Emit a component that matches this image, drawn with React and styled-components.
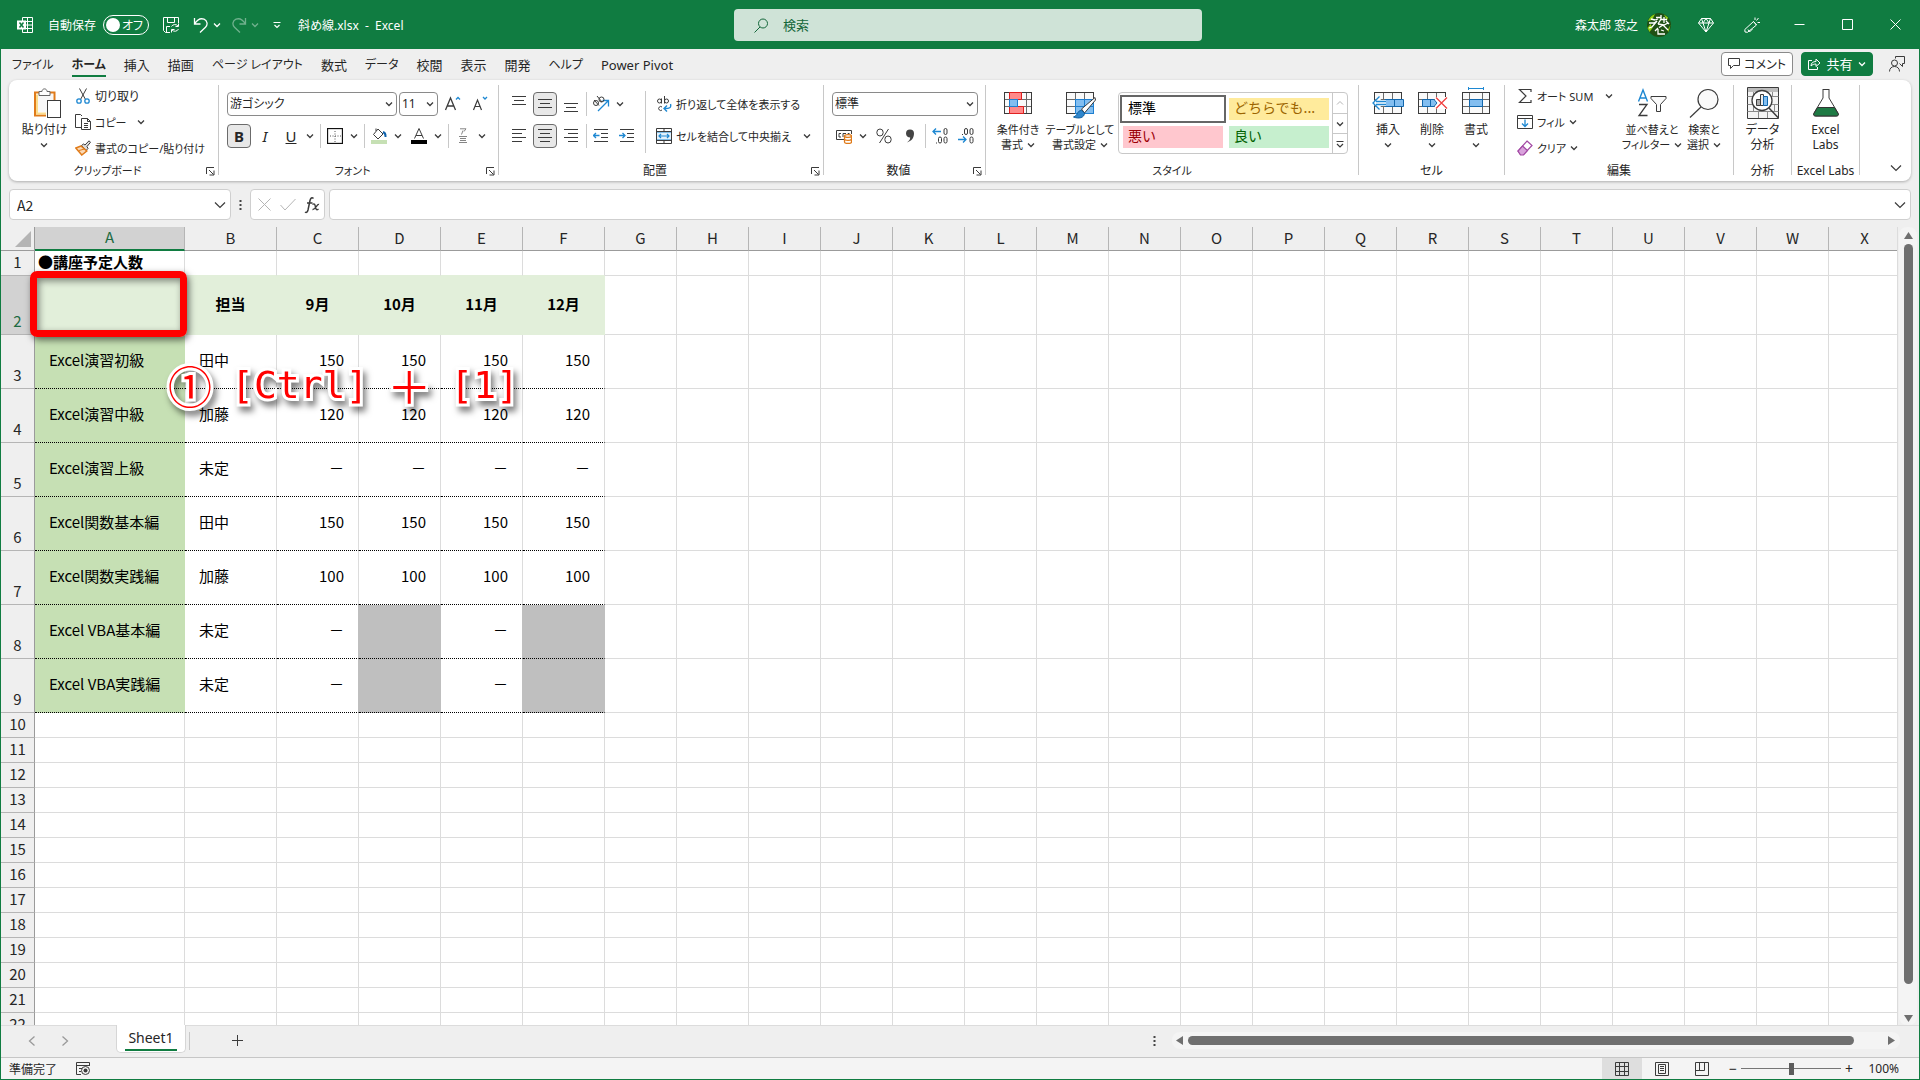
import React, { useState } from "react";
import styled, { createGlobalStyle } from "styled-components";

const colors = {
  green: "#107c41",
  chrome: "#efefef",
  line: "#c8c8c8",
  grid: "#dcdcdc",
  text: "#262626",
  icon: "#3b3b3b",
  blue: "#1e88d2",
  headFill: "#e2efda",
  nameFill: "#c6e0b4",
  blocked: "#bfbfbf",
};

const uiFont = `"Noto Sans", "Noto Sans CJK JP", sans-serif`;
const sheetFont = `"Noto Sans CJK JP", sans-serif`;

const GlobalStyle = createGlobalStyle`
  * {
    box-sizing: border-box;
  }
  body {
    margin: 0;
    font-family: ${uiFont};
    font-size: 12px;
    font-feature-settings: "palt";
    color: ${colors.text};
  }
  button,
  input,
  select {
    font: inherit;
    font-feature-settings: inherit;
    color: inherit;
    margin: 0;
  }
  svg {
    display: block;
    flex: none;
  }
`;

const Window = styled.div`
  display: flex;
  flex-direction: column;
  height: 100vh;
  background: ${colors.chrome};
  border: 1px solid ${colors.green};
  border-top: 0;
  overflow: hidden;
`;

/* ---------- title bar ---------- */

const TitleBar = styled.header`
  display: grid;
  grid-template-columns: minmax(0, 1fr) 468px minmax(0, 1fr);
  align-items: center;
  flex: none;
  height: 49px;
  padding-left: 16px;
  background: ${colors.green};
  color: #fff;
`;

const TitleLeft = styled.div`
  display: flex;
  align-items: center;
  gap: 6px;
  margin-top: 1px;
`;

const TitleRight = styled.div`
  display: flex;
  align-items: center;
  justify-content: flex-end;
`;

const IconButton = styled.button`
  display: flex;
  align-items: center;
  justify-content: center;
  width: ${({ $w }) => $w || 24}px;
  height: 24px;
  padding: 0;
  border: 1px solid ${({ $active }) => ($active ? "#6b6b6b" : "transparent")};
  border-radius: 4px;
  background: ${({ $active }) => ($active ? "#e8e8e8" : "transparent")};
  opacity: ${({ $dim }) => ($dim ? 0.4 : 1)};
  font-size: 15px;
  line-height: 1;
`;

const AutoSave = styled.label`
  display: flex;
  align-items: center;
  gap: 7px;
  margin: 0 4px 0 9px;
`;

const Switch = styled.span`
  display: grid;
  align-items: center;

  input,
  span {
    grid-area: 1 / 1;
  }
  span {
    justify-self: end;
    padding-right: 6px;
    pointer-events: none;
  }
  input {
    appearance: none;
    width: 46px;
    height: 20px;
    border: 1px solid #fff;
    border-radius: 10px;
  }
  input::before {
    content: "";
    display: block;
    width: 14px;
    height: 14px;
    margin: 2px;
    border-radius: 50%;
    background: #fff;
  }
`;

const FileName = styled.span`
  margin-left: 3px;
  white-space: pre;
`;

const SearchBox = styled.label`
  display: flex;
  align-items: center;
  gap: 14px;
  height: 32px;
  margin-top: 1px;
  padding: 0 20px;
  border-radius: 4px;
  background: #cfe3d7;
  color: #14673a;

  input {
    flex: 1;
    min-width: 0;
    padding: 0;
    border: 0;
    outline: 0;
    background: transparent;
    font-size: 13px;
  }
  input::placeholder {
    color: #14673a;
    opacity: 1;
  }
`;

const UserInfo = styled.div`
  display: flex;
  align-items: center;
  gap: 9px;
  margin-right: 12px;
`;

/* ---------- tabs ---------- */

const TabBar = styled.nav`
  display: flex;
  align-items: center;
  flex: none;
  height: 31px;
  padding: 0 6px 0 2px;
`;

const Tab = styled.button`
  padding: 0 9px;
  border: 0;
  background: none;
  font-size: ${({ $small }) => ($small ? 12 : 13)}px;
  font-weight: ${({ $active }) => ($active ? 700 : 400)};
  line-height: 20px;
  white-space: nowrap;

  span {
    display: block;
    padding-top: 3px;
    border-bottom: 2px solid
      ${({ $active }) => ($active ? colors.green : "transparent")};
  }
`;

const TabActions = styled.div`
  display: flex;
  align-items: center;
  gap: 8px;
  margin: 0 0 2px auto;
`;

const PillButton = styled.button`
  display: flex;
  align-items: center;
  justify-content: space-between;
  gap: 4px;
  min-width: 72px;
  height: 24px;
  padding: 0 6px;
  border: 1px solid ${({ $primary }) => ($primary ? colors.green : "#8a8a8a")};
  border-radius: 4px;
  background: ${({ $primary }) => ($primary ? colors.green : "#fff")};
  color: ${({ $primary }) => ($primary ? "#fff" : colors.text)};
  font-size: ${({ $primary }) => ($primary ? 13 : 12)}px;
  white-space: nowrap;
`;

/* ---------- ribbon ---------- */

const Ribbon = styled.section`
  display: flex;
  flex: none;
  height: 101px;
  margin: 0 8px;
  padding-top: 3px;
  border-radius: 8px;
  background: #fff;
  box-shadow: 0 1px 3px rgba(0, 0, 0, 0.28);
`;

const Group = styled.div`
  display: flex;
  flex-direction: column;
  flex: none;
  width: ${({ $w }) => $w}px;
`;

const GroupBody = styled.div`
  display: flex;
  align-items: flex-start;
  height: 80px;
  padding-left: ${({ $pad }) => $pad || 0}px;
`;

const GroupLabel = styled.div`
  display: grid;
  grid-template-columns: ${({ $launcher }) => ($launcher ? "1fr 12px" : "1fr")};
  align-items: center;
  height: 16px;
  font-size: ${({ $small }) => ($small ? 11 : 12)}px;
  line-height: 16px;
  text-align: center;
  white-space: nowrap;
`;

const Launcher = styled.button`
  padding: 0;
  border: 0;
  background: none;
`;

const Divider = styled.div`
  flex: none;
  width: 1px;
  height: 90px;
  margin-top: 2px;
  background: ${colors.line};
`;

const InnerDivider = styled.div`
  flex: none;
  width: 1px;
  height: 62px;
  margin: 8px 8px 0 6px;
  background: ${colors.line};
`;

const ToolRows = styled.div`
  display: flex;
  flex-direction: column;
  gap: 8px;
  padding-top: 9px;
`;

const ToolRow = styled.div`
  display: flex;
  align-items: center;
  gap: 2px;
  height: 24px;
`;

const Split = styled.div`
  display: flex;
  align-items: center;
`;

const Separator = styled.div`
  width: 1px;
  height: 24px;
  margin-left: 1px;
  background: ${colors.line};
`;

const Combo = styled.div`
  display: grid;
  align-items: center;
  width: ${({ $w }) => $w}px;

  select,
  svg {
    grid-area: 1 / 1;
  }
  svg {
    justify-self: end;
    margin-right: 4px;
    pointer-events: none;
  }
  select {
    appearance: none;
    width: 100%;
    height: 24px;
    padding: 0 2px;
    border: 1px solid #8a8a8a;
    border-radius: 4px;
    background: #fff;
    line-height: 20px;
  }
`;

const SmallColumn = styled.div`
  display: flex;
  flex-direction: column;
  width: ${({ $w }) => $w}px;
`;

const SmallButton = styled.button`
  display: flex;
  align-items: center;
  gap: 4px;
  height: ${({ $h }) => $h || 26}px;
  padding: 0 2px;
  border: 0;
  background: none;
  font-size: ${({ $compact }) => ($compact ? 11 : 12)}px;
  white-space: nowrap;

  svg:last-child {
    margin-left: ${({ $chevGap }) => $chevGap || 0}px;
  }
`;

const LargeButton = styled.button`
  display: flex;
  flex-direction: column;
  align-items: center;
  gap: 3px;
  width: ${({ $w }) => $w}px;
  padding: 4px 0 0;
  border: 0;
  background: none;
  font-size: ${({ $compact }) => ($compact ? 11 : 12)}px;
  line-height: 15px;
  white-space: nowrap;
`;

const LargeLabel = styled.span`
  display: flex;
  flex-direction: column;
  align-items: center;
`;

const LabelLine = styled.span`
  display: flex;
  align-items: center;
  justify-content: center;
  gap: 4px;
  min-height: 15px;
`;

const Gallery = styled.div`
  display: flex;
  width: 230px;
  height: 62px;
  margin: 9px 0 0 4px;
  border: 1px solid ${colors.line};
  border-radius: 4px;
`;

const Swatches = styled.div`
  display: grid;
  grid-template-columns: 106px 106px;
  grid-template-rows: 28px 28px;
  flex: 1;
  padding: 2px 0 0 1px;
`;

const Swatch = styled.button`
  padding: 0 5px 4px;
  border: 3px solid #fff;
  background: ${({ $bg }) => $bg};
  color: ${({ $fg }) => $fg};
  font-family: ${sheetFont};
  font-size: 14px;
  font-feature-settings: normal;
  line-height: 18px;
  text-align: left;
  white-space: nowrap;
  outline: ${({ $selected }) => ($selected ? "2px solid #666" : "none")};
  outline-offset: -2px;
`;

const GalleryScroll = styled.div`
  display: grid;
  grid-template-rows: 1fr 1fr 1fr;
  width: 15px;
  border-left: 1px solid ${colors.line};

  button {
    display: grid;
    place-items: center;
    padding: 0;
    border: 0;
    background: none;
  }
  button + button {
    border-top: 1px solid ${colors.line};
  }
`;

const Collapse = styled.button`
  align-self: flex-end;
  margin: 0 9px 9px auto;
  padding: 0;
  border: 0;
  background: none;
`;

/* ---------- formula bar ---------- */

const FormulaBar = styled.section`
  display: flex;
  align-items: center;
  flex: none;
  height: 31px;
  margin: 8px 8px 7px;
`;

const FieldBox = styled.div`
  display: flex;
  align-items: center;
  flex: ${({ $grow }) => ($grow ? "1" : "none")};
  width: ${({ $w }) => ($w ? `${$w}px` : "auto")};
  height: 31px;
  padding: 0 4px 0 7px;
  border: 1px solid #cfcfcf;
  border-radius: 4px;
  background: #fff;

  input {
    flex: 1;
    min-width: 0;
    padding: 0;
    border: 0;
    outline: 0;
    background: transparent;
    font-family: ${sheetFont};
    font-size: 14px;
  }
`;

const Dots = styled.div`
  display: grid;
  place-items: center;
  width: 19px;
`;

const FxBox = styled(FieldBox)`
  justify-content: space-between;
  margin-right: 4px;
`;

/* ---------- sheet ---------- */

const SheetArea = styled.main`
  display: flex;
  flex: 1;
  min-height: 0;
`;

const GridView = styled.div`
  position: relative;
  flex: 1;
  min-width: 0;
  overflow: hidden;
  border-right: 1px solid ${colors.grid};
  background: #fff;
`;

const Table = styled.table`
  table-layout: fixed;
  width: 1900px;
  border-collapse: separate;
  border-spacing: 0;
  font-family: ${sheetFont};
  font-size: 15px;
  font-feature-settings: normal;
  line-height: 18px;
`;

const Corner = styled.td`
  height: 24px;
  padding: 0 3px 3px 0;
  border-right: 1px solid #9b9b9b;
  border-bottom: 1px solid #9b9b9b;
  background: ${colors.chrome};
  vertical-align: bottom;

  svg {
    margin-left: auto;
  }
`;

const ColHead = styled.th`
  height: 24px;
  padding: 0 0 2px;
  border-right: 1px solid #b5b5b5;
  border-bottom: ${({ $active }) =>
    $active ? `2px solid ${colors.green}` : "1px solid #9b9b9b"};
  background: ${({ $active }) => ($active ? "#d2d2d2" : colors.chrome)};
  color: ${({ $active }) => ($active ? "#1e6b43" : colors.text)};
  font-weight: 400;
`;

const RowHead = styled.th`
  height: ${({ $h }) => $h}px;
  padding: 0 0 4px;
  border-right: 1px solid #9b9b9b;
  border-bottom: 1px solid #b5b5b5;
  background: ${({ $active }) => ($active ? "#d2d2d2" : colors.chrome)};
  color: ${({ $active }) => ($active ? "#1e6b43" : colors.text)};
  font-weight: 400;
  vertical-align: bottom;
`;

const Cell = styled.td`
  padding: 0 ${({ $pad }) => ($pad === undefined ? 14 : $pad)}px 3px;
  border-right: 1px solid ${({ $right }) => $right || colors.grid};
  border-bottom: 1px ${({ $dotted }) => ($dotted ? "dotted" : "solid")}
    ${({ $bottom, $dotted }) => ($dotted ? "#000" : $bottom || colors.grid)};
  background: ${({ $fill }) => $fill || "#fff"};
  color: #000;
  font-weight: ${({ $bold }) => ($bold ? 700 : 400)};
  text-align: ${({ $align }) => $align || "left"};
  vertical-align: middle;
  white-space: nowrap;
`;

const Highlight = styled.div`
  position: absolute;
  left: 29px;
  top: 44px;
  width: 157px;
  height: 66px;
  border: 7px solid #f00;
  border-radius: 7px;
  box-shadow: 2px 3px 7px rgba(0, 0, 0, 0.55),
    inset 2px 3px 7px rgba(0, 0, 0, 0.45);
`;

const Callout = styled.div`
  position: absolute;
  left: 167px;
  top: 128px;
  display: flex;
  align-items: center;
  gap: 19px;
  height: 60px;
  color: #f00;
  font-family: "DejaVu Sans Mono", "Noto Sans CJK JP", monospace;
  font-size: 38px;
  font-feature-settings: normal;
  line-height: 60px;
  white-space: nowrap;
  -webkit-text-stroke: 6px #fff;
  paint-order: stroke fill;
  filter: drop-shadow(3px 5px 3px rgba(0, 0, 0, 0.5));
`;

const WideMark = styled.span`
  font-family: ${sheetFont};
  font-size: 44px;
  line-height: 56px;
`;

const VScroll = styled.div`
  display: flex;
  flex-direction: column;
  align-items: center;
  flex: none;
  width: 18px;
  margin: 0 2px 0 1px;
  padding: 5px 0 3px;
  border-radius: 8px;
  background: #f4f4f4;
`;

const VThumb = styled.div`
  flex: 1;
  width: 9px;
  margin: 5px 0 31px;
  border-radius: 5px;
  background: #6f6f6f;
`;

/* ---------- sheet tabs and status bar ---------- */

const SheetBar = styled.footer`
  display: flex;
  align-items: center;
  flex: none;
  height: 33px;
  padding: 0 19px 2px 0;
  border-top: 1px solid ${colors.grid};
  border-bottom: 1px solid #c6c6c6;
`;

const SheetNav = styled.div`
  display: flex;
  gap: 9px;
  width: 115px;
  padding-left: 19px;
`;

const SheetTab = styled.button`
  align-self: flex-start;
  width: 70px;
  height: 28px;
  margin-top: -1px;
  padding: 1px 8px 0;
  border: 1px solid #d6d6d6;
  border-top: 0;
  border-radius: 0 0 5px 5px;
  background: #fff;
  font-size: 14px;
  line-height: 22px;

  span {
    display: block;
    border-bottom: 2px solid ${colors.green};
  }
`;

const TabEnd = styled.div`
  width: 1px;
  height: 18px;
  margin: 0 35px 0 3px;
  background: ${colors.line};
`;

const HScroll = styled.div`
  display: flex;
  align-items: center;
  width: 728px;
  height: 17px;
  margin-left: 8px;
  padding: 0 5px 0 4px;
  border-radius: 8px;
  background: #f4f4f4;
`;

const HThumb = styled.div`
  flex: 1;
  height: 9px;
  margin: 0 34px 0 5px;
  border-radius: 5px;
  background: #6f6f6f;
`;

const StatusBar = styled.footer`
  display: flex;
  align-items: center;
  flex: none;
  height: 21px;
  padding: 0 20px 0 8px;
  background: #f4f4f4;
`;

const StatusText = styled.span`
  margin-right: 19px;
`;

const ViewButtons = styled.div`
  display: flex;
  margin-right: 3px;
`;

const ViewButton = styled.button`
  display: grid;
  place-items: center;
  width: 40px;
  height: 21px;
  padding: 0;
  border: 0;
  background: ${({ $active }) => ($active ? "#dedede" : "transparent")};
`;

const ZoomStep = styled.button`
  width: 16px;
  padding: 0;
  border: 0;
  background: none;
  font-size: 14px;
  line-height: 18px;
`;

const ZoomSlider = styled.input`
  appearance: none;
  width: 100px;
  height: 12px;
  background: linear-gradient(#767676, #767676) center / 100% 1px no-repeat;

  &::-webkit-slider-thumb {
    appearance: none;
    width: 5px;
    height: 12px;
    background: #5c5c5c;
  }
`;

const ZoomValue = styled.span`
  width: 42px;
  text-align: right;
`;

const Spacer = styled.div`
  flex: 1;
`;

/* ---------- icons ---------- */

const Icon = ({ w = 16, h = 16, stroke = colors.icon, children }) => (
  <svg
    width={w}
    height={h}
    viewBox={`0 0 ${w} ${h}`}
    fill="none"
    stroke={stroke}
    strokeWidth="1"
    aria-hidden="true"
  >
    {children}
  </svg>
);

const Chevron = ({ color = colors.icon }) => (
  <Icon w={8} h={6} stroke={color}>
    <path d="M1 1.5l3 3 3-3" strokeWidth="1.3" />
  </Icon>
);

const BigChevron = () => (
  <Icon w={12} h={8}>
    <path d="M1 1.5l5 5 5-5" strokeWidth="1.2" />
  </Icon>
);

const LauncherIcon = () => (
  <Icon w={9} h={9}>
    <path d="M.5 7V.5H8M3 3l4.500 4.500M8 3.500V8H3.500" />
  </Icon>
);

const ExcelIcon = () => (
  <Icon stroke="#fff">
    <path d="M5.500 4V.5h10v15h-10V12M5.500 4.500h10M10.500 .5v15M8 8h7.500M6 11.500h9.500" />
    <rect x="0" y="3.500" width="9" height="9" fill="#fff" stroke="none" />
    <path d="M2.500 5.500l4 5M6.500 5.500l-4 5" stroke={colors.green} strokeWidth="1.500" />
  </Icon>
);

const SaveIcon = () => (
  <Icon stroke="#fff">
    <path d="M7 15.500H2.500l-2-2V.5h15V6M4.500 .5v5h7v-5M3.500 15V9.500H7" />
    <path d="M8.500 9.500A4 4 0 0 1 15 9M15.500 6.500V9.500h-3M15.500 12A4 4 0 0 1 9 13M8.500 15.500V12.500h3" />
  </Icon>
);

const UndoIcon = () => (
  <Icon stroke="#fff">
    <path d="M1.500 1v6h6M1.500 7C4 3 7.500 .8 11 2.200c3.500 1.500 4 5.500 1.500 8L7 15.500" strokeWidth="1.300" />
  </Icon>
);

const RedoIcon = () => (
  <Icon stroke="#fff">
    <path d="M14.500 1v6h-6M14.500 7C12 3 8.500 .8 5 2.200c-3.500 1.500-4 5.500-1.500 8L9 15.500" strokeWidth="1.300" />
  </Icon>
);

const CustomizeIcon = () => (
  <Icon w={8} h={8} stroke="#fff">
    <path d="M.5 1.500h7M1.500 4l2.500 2.500L6.500 4" strokeWidth="1.200" />
  </Icon>
);

const SearchIcon = () => (
  <Icon w={15} h={15} stroke="#14673a">
    <circle cx="9" cy="5.500" r="4.500" />
    <path d="M6 9L.5 14.500" />
  </Icon>
);

const Avatar = () => (
  <Icon w={24} h={24} stroke="#fff">
    <circle cx="12" cy="12" r="12" fill="#1f5015" stroke="none" />
    <path d="M1 8a12 12 0 0 1 7-7l-3 6zM.5 15l3-4 2 4-3 4zM23.500 12l-3 5 1 2zM17 1.500l4 3-1 3z" fill="#8fd014" stroke="none" />
    <path d="M4 6l4 1M2 10h5l3-2-5 6-3 1M9 4.500h5M8 7l3-1M14 2v4l-3 5M14 6.500h6M17 4v6M19 8l3 3M11 11l6 1 4-2M12 14.500l4-2.500 5 5M11 15l-3 3M11 16v5h7M14 17l3 1" strokeWidth="1.300" />
  </Icon>
);

const DiamondIcon = () => (
  <Icon stroke="#fff">
    <path d="M3.500 1.500h9l3 4.500L8 15 .5 6zM.5 6h15M5 6l3 9 3-9M3.500 1.500L5 6l3-4.500L11 6l1.500-4.500" />
  </Icon>
);

const PenIcon = () => (
  <Icon stroke="#fff">
    <path d="M9.500 4.500L.8 12.500 1 15l2.500.3L12.500 8zM9.500 4.500l3 3.500M4 12.500l1.500 2.500 3-3M11 3V.5M12.500 3.500l2-2.500M13.500 5.500H16" />
  </Icon>
);

const Caption = ({ d }) => (
  <Icon w={11} h={11} stroke="#fff">
    <path d={d} />
  </Icon>
);

const CommentIcon = () => (
  <Icon w={12} h={11}>
    <path d="M.5 .5h11v7h-6l-3 3v-3h-2z" />
  </Icon>
);

const ShareIcon = () => (
  <Icon w={13} h={13} stroke="#fff">
    <path d="M4 3.500H.5v9h9V10M3 9c0-3 2-4.500 5-4.500V2l4 4-4 3.500V7C6 7 4.500 7.500 3 9z" />
  </Icon>
);

const PersonIcon = () => (
  <Icon>
    <circle cx="5.500" cy="7" r="3" />
    <path d="M.5 15.500c0-3 2-5 5-5s5 2 5 5M6.500 2.500v-2h9v7h-2v3l-3-3" />
  </Icon>
);

const PasteIcon = () => (
  <Icon w={32} h={32}>
    <g transform="translate(4 0)">
      <path d="M8 5.500H2v23h11M17 5.500h4.500V13" stroke="#e07b1a" strokeWidth="2" />
      <path d="M4 7.500v19h9" stroke="#fbdc8c" strokeWidth="2" />
      <rect x="5" y="7" width="15" height="18" fill="#f8f8f8" stroke="none" />
      <path d="M6 8.500V4.500h3c0-3.500 5-3.500 5 0h3v4z" fill="#fff" stroke="#666" />
      <rect x="14.500" y="13.500" width="13" height="17" fill="#fff" />
    </g>
  </Icon>
);

const CutIcon = () => (
  <Icon>
    <path d="M4.500 .5l6 11M11.500 .5l-6 11" />
    <circle cx="4" cy="13" r="2.200" stroke={colors.blue} strokeWidth="1.300" />
    <circle cx="12" cy="13" r="2.200" stroke={colors.blue} strokeWidth="1.300" />
  </Icon>
);

const CopyIcon = () => (
  <Icon>
    <path d="M6 13.500H.5V.5h5l1.500 1.500M6.500 4.500h6l3 3v8h-9zM12.500 4.500v3h3M9 9.500h4M9 11.500h4M9 13.500h4" />
  </Icon>
);

const BrushIcon = () => (
  <Icon>
    <path d="M10 5l4-4.200 1.500 1.500L12 6.500l1 2-2 2L6.500 5.500l2-1.500z" fill="#ddd" />
    <path d="M6 6L.8 8l6 7 5-4z" fill="#fbd9b5" stroke="#e07b1a" strokeWidth="1.500" />
    <path d="M4 10.500L9.500 9" stroke="#e07b1a" />
  </Icon>
);

const GrowFont = ({ small }) => (
  <Icon w={18} h={18}>
    {small ? (
      <path d="M2.500 15L6.500 5l4 10M4 11.500h5" strokeWidth="1.200" />
    ) : (
      <path d="M1.500 15l5-12 5 12M3.500 11h6" strokeWidth="1.300" />
    )}
    <path
      d={small ? "M12 2l2 2 2-2" : "M12 4.500l2-2 2 2"}
      stroke={colors.blue}
      strokeWidth="1.300"
    />
  </Icon>
);

const BordersIcon = () => (
  <Icon>
    <rect x=".5" y=".5" width="15" height="15" fill="#fff" stroke="#111" strokeWidth="1.300" />
    <path d="M8 3v11M3 8h11" stroke="#555" strokeDasharray="1 1.500" />
  </Icon>
);

const FillIcon = () => (
  <Icon>
    <path d="M7 1l5 5-5 5-4.500-4.500zM5 3V.5" />
    <path d="M12 4c3 1 2.500 3 2.500 5" stroke="#0f62ac" strokeWidth="2" />
    <rect x="0" y="12" width="16" height="4" fill="#c6e0b4" stroke="none" />
  </Icon>
);

const FontColorIcon = () => (
  <Icon>
    <path d="M3.500 10.500L8 .5l4.500 10M5 7.500h6" />
    <rect x="0" y="12" width="16" height="4" fill="#000" stroke="none" />
  </Icon>
);

const PhoneticIcon = () => (
  <Icon stroke="#858585">
    <path d="M5 .8h6L9 3.500M8 2.500L6.500 6.500M4 8.500h8M5 10.500h6M5 12.500h6M4 14.500h8" />
  </Icon>
);

const Lines = ({ rows }) => (
  <Icon>
    {rows.map(([x, len], i) => (
      <path key={i} d={`M${x} ${i * 4 + 1.5}h${len}`} />
    ))}
  </Icon>
);

const VLines = ({ top }) => (
  <Icon>
    <path d={`M1 ${top + 0.5}h14M3 ${top + 4.5}h10M1 ${top + 8.5}h14`} />
  </Icon>
);

const OrientationIcon = () => (
  <Icon w={18} h={18}>
    <path d="M6 16L16 6M10.500 5.500H16.500V11.500" stroke={colors.blue} strokeWidth="1.300" />
    <circle cx="4" cy="8" r="2.500" />
    <path d="M2 5l5 5.500M5 1l5 6" />
    <circle cx="9.500" cy="4.500" r="2.500" />
  </Icon>
);

const IndentIcon = ({ right }) => (
  <Icon>
    <path d="M1 1.500h14M8 5.500h7M8 9.500h7M1 13.500h14" />
    <path
      d={right ? "M0 7.500h6M3.500 5l2.500 2.500-2.500 2.500" : "M6.500 7.500H.5M3 5L.5 7.500 3 10"}
      stroke={colors.blue}
      strokeWidth="1.300"
    />
  </Icon>
);

const WrapIcon = () => (
  <Icon>
    <circle cx="3.500" cy="5" r="2" />
    <path d="M5.500 2.500V7.500M8.500 0v7.500M6 11a2 2 0 1 0 0 3" />
    <circle cx="10.500" cy="5" r="2" />
    <path d="M14.500 8c1 4-1 4.500-6 4.500M11 9.500l-3 3 3 3" stroke={colors.blue} strokeWidth="1.400" />
  </Icon>
);

const MergeIcon = () => (
  <Icon>
    <rect x=".5" y="4" width="15" height="8" fill="#e3f1fb" stroke={colors.blue} />
    <path d="M.5 .5h15v15H.5zM8 .5V4M8 12v3.500M.5 3.500h15M.5 12.500h15" />
    <path d="M3 8h10M5 6L3 8l2 2M11 6l2 2-2 2" stroke={colors.blue} strokeWidth="1.200" />
  </Icon>
);

const CurrencyIcon = () => (
  <Icon>
    <path d="M8 11.500H.5v-9h15V6M5 5.500H3v3.500h2M7 9V5.500h3M12 8V5.500h1.500" />
    <path d="M8.500 8v6c0 2 7 2 7 0V8" fill="#fff" stroke="#e07b1a" strokeWidth="1.300" />
    <ellipse cx="12" cy="8" rx="3.500" ry="1.400" stroke="#e07b1a" strokeWidth="1.300" fill="#fff" />
    <path d="M8.500 11c0 1.700 7 1.700 7 0" stroke="#e07b1a" strokeWidth="1.300" />
  </Icon>
);

const PercentIcon = () => (
  <Icon>
    <ellipse cx="4" cy="4.500" rx="3.200" ry="3.500" />
    <ellipse cx="12" cy="11.500" rx="3.200" ry="3.500" />
    <path d="M12.500 1l-9 14" />
  </Icon>
);

const CommaIcon = () => (
  <Icon>
    <path d="M4 5.500a4 4 0 0 1 8 0c0 4.500-2.500 7.500-7 9 2-1.500 3.200-3 3.200-5C6 9.500 4 8 4 5.500z" fill="#444" stroke="none" />
  </Icon>
);

const DecimalIcon = ({ less }) => (
  <Icon>
    {less ? (
      <>
        <path d="M4.500 6v1" />
        <rect x="6.500" y=".5" width="3" height="6" rx="1.500" />
        <rect x="12" y=".5" width="3" height="6" rx="1.500" />
        <rect x="12" y="9" width="3" height="6" rx="1.500" />
        <path d="M0 11.500h8M5 8.500l3 3-3 3" stroke={colors.blue} strokeWidth="1.300" />
      </>
    ) : (
      <>
        <path d="M4.500 14.500v1" />
        <rect x="12" y=".5" width="3" height="6" rx="1.500" />
        <rect x="6.500" y="9" width="3" height="6" rx="1.500" />
        <rect x="12" y="9" width="3" height="6" rx="1.500" />
        <path d="M9 3.500H1M4 .5l-3 3 3 3" stroke={colors.blue} strokeWidth="1.300" />
      </>
    )}
  </Icon>
);

// Shared 28x22 table outline that several large icons are drawn over
const GridBase = ({ children, cols = "M9.500 5v22M22.500 5v22" }) => (
  <Icon w={32} h={32}>
    <rect x="2.500" y="5.500" width="27" height="21" fill="#fafafa" />
    <path d={`${cols}M2 12.500h28M2 19.500h28`} stroke="#6b6b6b" />
    <rect x="2.500" y="5.500" width="27" height="21" />
    {children}
  </Icon>
);

const ConditionalIcon = () => (
  <GridBase cols="M7.500 5v22M24.500 5v22">
    <path d="M7.500 5.500h12v7h-12zM7.500 19.500h14v7h-14z" fill="#ff8a8a" stroke="#e02020" />
    <rect x="7.500" y="12.500" width="8" height="7" fill="#83bef0" stroke="#1e7fd0" />
  </GridBase>
);

const TableIcon = () => (
  <GridBase cols="M11.500 5v22M20.500 5v22">
    <rect x="11.500" y="12.500" width="18" height="14" fill="#83bef0" stroke="#1e7fd0" />
    <path d="M11 19.500h18M20.500 12.500v14" stroke="#1e7fd0" />
    <path d="M31 10.500L17.500 22l3 4L31.500 13z" fill="#fff" />
    <path d="M17.500 23.500c-5 0-3 5-8 6.500 5 2 11 1 11-4z" fill="#2f86cc" stroke="#0f5f9f" />
  </GridBase>
);

const InsertIcon = () => (
  <GridBase cols="M11.500 5v22M20.500 5v22">
    <path d="M13 12.500h18.500v7H13z" fill="#83bef0" stroke="#1267ad" />
    <path d="M22.500 12.500v7" stroke="#1267ad" />
    <path d="M0 16l7-6.500L9 13h5v6H9l-2 3.500z" fill="#fff" stroke="none" />
    <path d="M14 14.500H4M14 17.500H4M7.500 9.500L1 16l6.500 6.500" stroke={colors.blue} strokeWidth="1.300" />
  </GridBase>
);

const DeleteIcon = () => (
  <GridBase cols="M11.500 5v22M20.500 5v22">
    <path d="M19 10h13v12H19z" fill="#fff" stroke="none" />
    <path d="M6.500 12.500H18l3 3.500-3 3.500H6.500zM14.500 12.500v7" fill="#83bef0" stroke="#1267ad" />
    <path d="M20 10.500l11 11M31 10.500l-11 11" stroke="#f04040" strokeWidth="1.300" />
  </GridBase>
);

const FormatIcon = () => (
  <GridBase>
    <rect x="9.500" y="12.500" width="13" height="7" fill="#83bef0" stroke="#1267ad" />
    <path d="M8.500 1.500h15M8.500 0v3M23.500 0v3" stroke={colors.blue} />
  </GridBase>
);

const SigmaIcon = () => (
  <Icon>
    <path d="M14 4V1.500H2.500L9 8l-6.500 6.500H14V12" strokeWidth="1.200" />
  </Icon>
);

const FillDownIcon = () => (
  <Icon>
    <path d="M.5 1.500h15v13H.5zM.5 4.500h15" />
    <path d="M8 5.500v7M5 9.500l3 3 3-3" stroke={colors.blue} strokeWidth="1.300" />
  </Icon>
);

const EraserIcon = () => (
  <Icon>
    <path d="M10 1l5 4.500-8.500 9h-3L1 11z" fill="#fff" stroke="#a349a4" strokeWidth="1.200" />
    <path d="M5.500 6l5 4.500-4 4.500h-3L1 11z" fill="#d9a3dc" stroke="#a349a4" strokeWidth="1.200" />
  </Icon>
);

const SortIcon = () => (
  <Icon w={30} h={32}>
    <path d="M1.500 14.500L6 3l4.500 11.500M3 11h6" stroke={colors.blue} strokeWidth="1.400" />
    <path d="M2 17.500h8L2 28.500h8.500" strokeWidth="1.300" />
    <path d="M14 9.500h15v2l-5.500 6v7h-4v-7L14 11.500z" fill="#fafafa" />
  </Icon>
);

const FindIcon = () => (
  <Icon w={32} h={32}>
    <circle cx="20" cy="12.500" r="10" fill="#fafafa" strokeWidth="1.200" />
    <path d="M13 20L2 30.500" strokeWidth="1.200" />
  </Icon>
);

const AnalyzeIcon = () => (
  <Icon w={32} h={32}>
    <path d="M.5 .5h31v31H.5z" fill="#f4f4f4" />
    <path d="M1 1h30v4H1z" fill="#bcbcbc" stroke="none" />
    <path d="M.5 9.500h31M.5 17.500h31M.5 24.500h31M6.500 5v5M25.500 5v5M11.500 24v7M20.500 24v7M6.500 17v7M27.500 17v7" stroke="#8a8a8a" />
    <circle cx="15" cy="13.500" r="10" fill="#fff" strokeWidth="1.300" />
    <path d="M22 21l9.500 10" strokeWidth="1.500" />
    <path d="M9.500 12.500h4v6h-4z" fill="#aaa" />
    <path d="M13.500 7.500h3v11h-3z" fill="#eee" />
    <path d="M16.500 9.500h4v9h-4z" fill="#83bef0" stroke="#1267ad" />
  </Icon>
);

const FlaskIcon = () => (
  <Icon w={28} h={32}>
    <path d="M10.500 2.500h7M11 3v8L2 26c-1 2 0 3 2 3h20c2 0 3-1 2-3l-9-15V3" fill="#fff" />
    <path d="M5.500 20.500h17L26 26.500c1 1.500 0 2.500-2 2.500H4c-2 0-3-1-2-2.500z" fill="#1e7a44" stroke="#333" />
  </Icon>
);

const Triangle = ({ d, w, h, color = "#6f6f6f" }) => (
  <svg width={w} height={h} viewBox={`0 0 ${w} ${h}`} fill={color} aria-hidden="true">
    <path d={d} />
  </svg>
);

/* ---------- data ---------- */

const tabs = [
  "ファイル",
  "ホーム",
  "挿入",
  "描画",
  "ページ レイアウト",
  "数式",
  "データ",
  "校閲",
  "表示",
  "開発",
  "ヘルプ",
  "Power Pivot",
];

const columns = "ABCDEFGHIJKLMNOPQRSTUVWX".split("");
const columnWidth = (col) =>
  ({ A: 150, B: 92, C: 82, D: 82, E: 82, F: 82 })[col] || 72;

const sheetRows = [
  ["●講座予定人数"],
  ["", "担当", "9月", "10月", "11月", "12月"],
  ["Excel演習初級", "田中", "150", "150", "150", "150"],
  ["Excel演習中級", "加藤", "120", "120", "120", "120"],
  ["Excel演習上級", "未定", "－", "－", "－", "－"],
  ["Excel関数基本編", "田中", "150", "150", "150", "150"],
  ["Excel関数実践編", "加藤", "100", "100", "100", "100"],
  ["Excel VBA基本編", "未定", "－", null, "－", null],
  ["Excel VBA実践編", "未定", "－", null, "－", null],
];
const rowCount = 22;

const rowHeight = (row) => {
  if (row === 1) return 59;
  return row > 1 && row < 9 ? 54 : 25;
};

// Fill, borders and alignment of a cell from its place in the sheet
const cellProps = (row, col) => {
  if (col > 5 || row > 8) return {};
  if (row === 0) return { $pad: 3, $bold: true, $bottom: colors.headFill };
  if (row === 1) {
    return {
      $fill: colors.headFill,
      $right: colors.headFill,
      $bottom: col === 0 ? colors.green : colors.headFill,
      $align: "center",
      $bold: true,
    };
  }
  const values = sheetRows[row];
  const blocked = values[col] === null;
  const beforeBlocked = values[col + 1] === null;
  if (col === 0) {
    return { $fill: colors.nameFill, $right: colors.nameFill, $dotted: true };
  }
  return {
    $dotted: true,
    $align: col > 1 ? "right" : "left",
    $fill: blocked ? colors.blocked : undefined,
    $right: blocked || beforeBlocked ? colors.blocked : undefined,
  };
};

/* ---------- parts ---------- */

const RibbonGroup = ({ label, width, pad, launcher, small, children }) => (
  <>
    <Group $w={width}>
      <GroupBody $pad={pad}>{children}</GroupBody>
      <GroupLabel $small={small} $launcher={launcher}>
        <span>{label}</span>
        {launcher && (
          <Launcher aria-label={label}>
            <LauncherIcon />
          </Launcher>
        )}
      </GroupLabel>
    </Group>
    <Divider />
  </>
);

const SplitButton = ({ label, dim, color, chevWidth = 14, children }) => (
  <Split>
    <IconButton $dim={dim} aria-label={label}>
      {children}
    </IconButton>
    <IconButton $w={chevWidth} $dim={dim} aria-label={label}>
      <Chevron color={color} />
    </IconButton>
  </Split>
);

const BigButton = ({ icon, lines, width, chevron, compact }) => (
  <LargeButton $w={width} $compact={compact}>
    {icon}
    <LargeLabel>
      {lines.map((line, i) => (
        <LabelLine key={i}>
          {line}
          {chevron && i === lines.length - 1 && <Chevron />}
        </LabelLine>
      ))}
    </LargeLabel>
  </LargeButton>
);

const ComboBox = ({ label, value, width }) => (
  <Combo $w={width}>
    <select aria-label={label} defaultValue={value}>
      <option>{value}</option>
    </select>
    <Chevron />
  </Combo>
);

const TitleArea = () => (
  <TitleBar>
    <TitleLeft>
      <ExcelIcon />
      <AutoSave>
        自動保存
        <Switch>
          <input type="checkbox" />
          <span>オフ</span>
        </Switch>
      </AutoSave>
      <IconButton aria-label="保存">
        <SaveIcon />
      </IconButton>
      <SplitButton label="元に戻す" color="#fff" chevWidth={8}>
        <UndoIcon />
      </SplitButton>
      <SplitButton label="やり直し" color="#fff" chevWidth={8} dim>
        <RedoIcon />
      </SplitButton>
      <IconButton aria-label="カスタマイズ">
        <CustomizeIcon />
      </IconButton>
      <FileName>斜め線.xlsx  -  Excel</FileName>
    </TitleLeft>
    <SearchBox>
      <SearchIcon />
      <input type="search" placeholder="検索" aria-label="検索" />
    </SearchBox>
    <TitleRight>
      <UserInfo>
        <span>森太郎 窓之</span>
        <Avatar />
      </UserInfo>
      <IconButton $w={46} aria-label="Premium">
        <DiamondIcon />
      </IconButton>
      <IconButton $w={46} aria-label="ペン">
        <PenIcon />
      </IconButton>
      <IconButton $w={48} aria-label="最小化">
        <Caption d="M.5 5.500h10" />
      </IconButton>
      <IconButton $w={48} aria-label="最大化">
        <Caption d="M.5 .5h10v10H.5z" />
      </IconButton>
      <IconButton $w={48} aria-label="閉じる">
        <Caption d="M.5 .5l10 10M10.500 .5l-10 10" />
      </IconButton>
    </TitleRight>
  </TitleBar>
);

const ribbonStyles = [
  { name: "標準", bg: "#fff", fg: "#000", selected: true },
  { name: "どちらでも...", bg: "#ffeb9c", fg: "#9c6500" },
  { name: "悪い", bg: "#ffc7ce", fg: "#9c0006" },
  { name: "良い", bg: "#c6efce", fg: "#006100" },
];

const RibbonArea = () => (
  <Ribbon>
    <RibbonGroup label="クリップボード" width={209} pad={7} launcher small>
      <BigButton icon={<PasteIcon />} lines={["貼り付け", ""]} width={57} chevron />
      <SmallColumn $w={140}>
        <SmallButton>
          <CutIcon />
          切り取り
        </SmallButton>
        <SmallButton $compact $chevGap={6}>
          <CopyIcon />
          コピー
          <Chevron />
        </SmallButton>
        <SmallButton $compact>
          <BrushIcon />
          書式のコピー/貼り付け
        </SmallButton>
      </SmallColumn>
    </RibbonGroup>

    <RibbonGroup label="フォント" width={279} pad={8} launcher small>
      <ToolRows>
        <ToolRow>
          <ComboBox label="フォント名" value="游ゴシック" width={170} />
          <ComboBox label="フォント サイズ" value="11" width={39} />
          <IconButton $w={26} aria-label="拡大">
            <GrowFont />
          </IconButton>
          <IconButton aria-label="縮小">
            <GrowFont small />
          </IconButton>
        </ToolRow>
        <ToolRow>
          <IconButton $active aria-label="太字">
            <b>B</b>
          </IconButton>
          <IconButton aria-label="斜体">
            <i>I</i>
          </IconButton>
          <SplitButton label="下線">
            <u>U</u>
          </SplitButton>
          <Separator />
          <SplitButton label="罫線">
            <BordersIcon />
          </SplitButton>
          <Separator />
          <SplitButton label="塗りつぶし">
            <FillIcon />
          </SplitButton>
          <SplitButton label="文字色">
            <FontColorIcon />
          </SplitButton>
          <Separator />
          <SplitButton label="ふりがな">
            <PhoneticIcon />
          </SplitButton>
        </ToolRow>
      </ToolRows>
    </RibbonGroup>

    <RibbonGroup label="配置" width={324} pad={8} launcher>
      <ToolRows>
        <ToolRow>
          <IconButton aria-label="上揃え">
            <VLines top={0} />
          </IconButton>
          <IconButton $active aria-label="上下中央揃え">
            <VLines top={3} />
          </IconButton>
          <IconButton aria-label="下揃え">
            <VLines top={7} />
          </IconButton>
          <Separator />
          <SplitButton label="方向">
            <OrientationIcon />
          </SplitButton>
        </ToolRow>
        <ToolRow>
          <IconButton aria-label="左揃え">
            <Lines rows={[[1, 14], [1, 10], [1, 14], [1, 10]]} />
          </IconButton>
          <IconButton $active aria-label="中央揃え">
            <Lines rows={[[1, 14], [3, 10], [1, 14], [3, 10]]} />
          </IconButton>
          <IconButton aria-label="右揃え">
            <Lines rows={[[1, 14], [5, 10], [1, 14], [5, 10]]} />
          </IconButton>
          <Separator />
          <IconButton aria-label="インデント解除">
            <IndentIcon />
          </IconButton>
          <IconButton aria-label="インデント">
            <IndentIcon right />
          </IconButton>
        </ToolRow>
      </ToolRows>
      <InnerDivider />
      <ToolRows>
        <SmallButton $h={24} $compact>
          <WrapIcon />
          折り返して全体を表示する
        </SmallButton>
        <SmallButton $h={24} $compact $chevGap={8}>
          <MergeIcon />
          セルを結合して中央揃え
          <Chevron />
        </SmallButton>
      </ToolRows>
    </RibbonGroup>

    <RibbonGroup label="数値" width={161} pad={8} launcher>
      <ToolRows>
        <ToolRow>
          <ComboBox label="表示形式" value="標準" width={146} />
        </ToolRow>
        <ToolRow>
          <SplitButton label="通貨">
            <CurrencyIcon />
          </SplitButton>
          <IconButton aria-label="パーセント">
            <PercentIcon />
          </IconButton>
          <IconButton aria-label="桁区切り">
            <CommaIcon />
          </IconButton>
          <Separator />
          <IconButton aria-label="小数点以下を増やす">
            <DecimalIcon />
          </IconButton>
          <IconButton aria-label="小数点以下を減らす">
            <DecimalIcon less />
          </IconButton>
        </ToolRow>
      </ToolRows>
    </RibbonGroup>

    <RibbonGroup label="スタイル" width={372} pad={4} small>
      <BigButton icon={<ConditionalIcon />} lines={["条件付き", "書式"]} width={56} chevron compact />
      <BigButton icon={<TableIcon />} lines={["テーブルとして", "書式設定"]} width={68} chevron compact />
      <Gallery>
        <Swatches>
          {ribbonStyles.map((s) => (
            <Swatch key={s.name} $bg={s.bg} $fg={s.fg} $selected={s.selected}>
              {s.name}
            </Swatch>
          ))}
        </Swatches>
        <GalleryScroll>
          <button aria-label="上へ">
            <Icon w={8} h={6} stroke="#b5b5b5">
              <path d="M1 4.500l3-3 3 3" />
            </Icon>
          </button>
          <button aria-label="下へ">
            <Chevron />
          </button>
          <button aria-label="その他">
            <Icon w={8} h={8}>
              <path d="M.5 1.500h7M1 4l3 3 3-3" strokeWidth="1.200" />
            </Icon>
          </button>
        </GalleryScroll>
      </Gallery>
    </RibbonGroup>

    <RibbonGroup label="セル" width={145} pad={7}>
      <BigButton icon={<InsertIcon />} lines={["挿入", ""]} width={44} chevron />
      <BigButton icon={<DeleteIcon />} lines={["削除", ""]} width={44} chevron />
      <BigButton icon={<FormatIcon />} lines={["書式", ""]} width={44} chevron />
    </RibbonGroup>

    <RibbonGroup label="編集" width={228} pad={10}>
      <SmallColumn $w={111}>
        <SmallButton $compact $chevGap={8}>
          <SigmaIcon />
          オート SUM
          <Chevron />
        </SmallButton>
        <SmallButton $compact>
          <FillDownIcon />
          フィル
          <Chevron />
        </SmallButton>
        <SmallButton $compact>
          <EraserIcon />
          クリア
          <Chevron />
        </SmallButton>
      </SmallColumn>
      <BigButton icon={<SortIcon />} lines={["並べ替えと", "フィルター"]} width={52} chevron compact />
      <BigButton icon={<FindIcon />} lines={["検索と", "選択"]} width={52} chevron compact />
    </RibbonGroup>

    <RibbonGroup label="分析" width={57}>
      <BigButton icon={<AnalyzeIcon />} lines={["データ", "分析"]} width={57} />
    </RibbonGroup>

    <RibbonGroup label="Excel Labs" width={67}>
      <BigButton icon={<FlaskIcon />} lines={["Excel", "Labs"]} width={67} />
    </RibbonGroup>

    <Collapse aria-label="リボンを折りたたむ">
      <BigChevron />
    </Collapse>
  </Ribbon>
);

const DotsIcon = () => (
  <svg width="3" height="12" viewBox="0 0 3 12" fill="#444" aria-hidden="true">
    <path d="M.5 1h2v2h-2zM.5 5h2v2h-2zM.5 9h2v2h-2z" />
  </svg>
);

const FormulaArea = () => (
  <FormulaBar>
    <FieldBox $w={222}>
      <input defaultValue="A2" aria-label="名前ボックス" />
      <BigChevron />
    </FieldBox>
    <Dots>
      <DotsIcon />
    </Dots>
    <FxBox $w={75}>
      <Icon w={13} h={13} stroke="#b5b5b5">
        <path d="M.5 .5l12 12M12.500 .5l-12 12" />
      </Icon>
      <Icon w={16} h={13} stroke="#b5b5b5">
        <path d="M.5 7l4.500 5L15.500 1" />
      </Icon>
      <Icon w={16} h={18}>
        <path d="M9.500 2.500c-1.500-1.500-3-.5-3.500 2L4 14c-.5 2-1.500 3-3 2M3 7h5.500" strokeWidth="1.500" />
        <path d="M8.500 8.500c2-1.500 2.500 0 3 2.500s1 3.500 3 2M15 8.500c-2-1-3.500 5.500-6.500 5" strokeWidth="1.400" />
      </Icon>
    </FxBox>
    <FieldBox $grow>
      <input aria-label="数式バー" />
      <BigChevron />
    </FieldBox>
  </FormulaBar>
);

const SheetGrid = () => (
  <GridView>
    <Table>
      <colgroup>
        <col width="34" />
        {columns.map((col) => (
          <col key={col} width={columnWidth(col)} />
        ))}
      </colgroup>
      <thead>
        <tr>
          <Corner>
            <Triangle w={16} h={16} d="M16 0v16H0z" color="#b4b4b4" />
          </Corner>
          {columns.map((col) => (
            <ColHead key={col} $active={col === "A"}>
              {col}
            </ColHead>
          ))}
        </tr>
      </thead>
      <tbody>
        {Array.from({ length: rowCount }, (_, row) => (
          <tr key={row}>
            <RowHead $h={rowHeight(row)} $active={row === 1}>
              {row + 1}
            </RowHead>
            {columns.map((col, c) => (
              <Cell key={col} {...cellProps(row, c)}>
                {sheetRows[row]?.[c]}
              </Cell>
            ))}
          </tr>
        ))}
      </tbody>
    </Table>
    <Highlight />
    <Callout>
      <WideMark>①</WideMark>
      <span>[Ctrl]</span>
      <WideMark>＋</WideMark>
      <span>[1]</span>
    </Callout>
  </GridView>
);

const BottomArea = () => {
  const [zoom, setZoom] = useState(100);

  return (
    <>
      <SheetBar>
        <SheetNav>
          <IconButton aria-label="前のシート">
            <Icon w={8} h={10} stroke="#9a9a9a">
              <path d="M6.500 .5L1.500 5l5 4.500" strokeWidth="1.300" />
            </Icon>
          </IconButton>
          <IconButton aria-label="次のシート">
            <Icon w={8} h={10} stroke="#9a9a9a">
              <path d="M1.500 .5l5 4.500-5 4.500" strokeWidth="1.300" />
            </Icon>
          </IconButton>
        </SheetNav>
        <SheetTab>
          <span>Sheet1</span>
        </SheetTab>
        <TabEnd />
        <IconButton aria-label="新しいシート">
          <Icon w={11} h={11}>
            <path d="M5.500 0v11M0 5.500h11" />
          </Icon>
        </IconButton>
        <Spacer />
        <Dots>
          <DotsIcon />
        </Dots>
        <HScroll>
          <Triangle w={7} h={9} d="M7 0v9L0 4.500z" />
          <HThumb />
          <Triangle w={7} h={9} d="M0 0v9l7-4.500z" />
        </HScroll>
      </SheetBar>
      <StatusBar>
        <StatusText>準備完了</StatusText>
        <Icon w={15} h={14}>
          <path d="M5 12.500H.5V.5h13V4M.5 3.500h13M3 6.500h3M3 9.500h2" />
          <circle cx="9.500" cy="8.500" r="4" />
          <circle cx="9.500" cy="8.500" r="2" fill="#3b3b3b" stroke="none" />
        </Icon>
        <Spacer />
        <ViewButtons>
          <ViewButton $active aria-label="標準">
            <Icon w={14} h={14}>
              <path d="M.5 .5h13v13H.5zM4.500 .5v13M9.500 .5v13M.5 4.500h13M.5 9.500h13" />
            </Icon>
          </ViewButton>
          <ViewButton aria-label="ページ レイアウト">
            <Icon w={14} h={14}>
              <path d="M.5 .5h13v13H.5zM3.500 2.500h7v9h-7zM5 4.500h4M5 6.500h4M5 8.500h4" />
            </Icon>
          </ViewButton>
          <ViewButton aria-label="改ページ プレビュー">
            <Icon w={14} h={14}>
              <path d="M.5 .5h13v13H.5zM.5 8.500h9v-8M4.500 .5v8" />
            </Icon>
          </ViewButton>
        </ViewButtons>
        <ZoomStep aria-label="縮小" onClick={() => setZoom(zoom - 10)}>
          −
        </ZoomStep>
        <ZoomSlider
          type="range"
          min="0"
          max="200"
          value={zoom}
          aria-label="ズーム"
          onChange={(e) => setZoom(Number(e.target.value))}
        />
        <ZoomStep aria-label="拡大" onClick={() => setZoom(zoom + 10)}>
          +
        </ZoomStep>
        <ZoomValue>{zoom}%</ZoomValue>
      </StatusBar>
    </>
  );
};

export default function App() {
  const [activeTab, setActiveTab] = useState("ホーム");

  return (
    <>
      <GlobalStyle />
      <Window>
        <TitleArea />
        <TabBar>
          {tabs.map((name) => (
            <Tab
              key={name}
              $active={name === activeTab}
              $small={/[ァ-ヶ]/.test(name)}
              onClick={() => setActiveTab(name)}
            >
              <span>{name}</span>
            </Tab>
          ))}
          <TabActions>
            <PillButton>
              <CommentIcon />
              コメント
            </PillButton>
            <PillButton $primary>
              <ShareIcon />
              共有
              <Chevron color="#fff" />
            </PillButton>
            <IconButton $w={32} aria-label="アカウント">
              <PersonIcon />
            </IconButton>
          </TabActions>
        </TabBar>
        <RibbonArea />
        <FormulaArea />
        <SheetArea>
          <SheetGrid />
          <VScroll>
            <Triangle w={9} h={7} d="M4.500 0L9 7H0z" />
            <VThumb />
            <Triangle w={9} h={7} d="M4.500 7L0 0h9z" />
          </VScroll>
        </SheetArea>
        <BottomArea />
      </Window>
    </>
  );
}
